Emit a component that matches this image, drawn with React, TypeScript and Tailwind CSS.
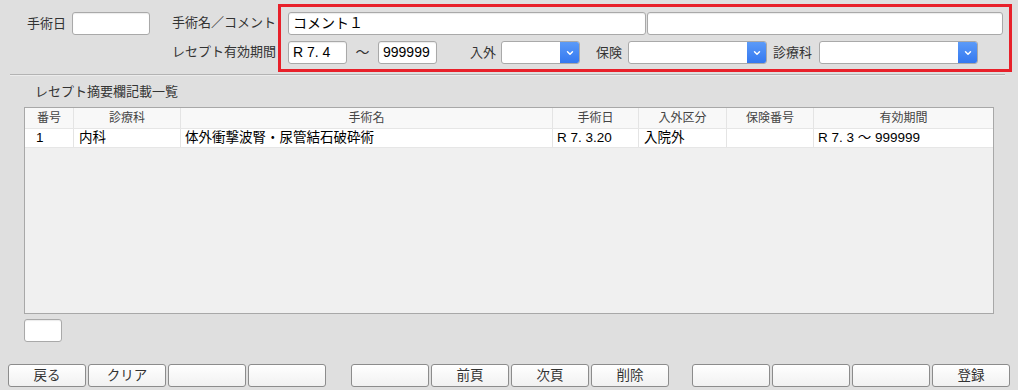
import { ChevronDown } from 'lucide-react';

const font = "font-['Liberation_Sans','Noto_Sans_CJK_JP',sans-serif]";

const columns = [
  { label: '番号', width: 'w-[48px]', cell: 'pl-[11px]' },
  { label: '診療科', width: 'w-[107px]', cell: 'pl-[5px]' },
  { label: '手術名', width: 'w-[372px]', cell: 'pl-[4px]' },
  { label: '手術日', width: 'w-[86px]', cell: 'pl-[4px]' },
  { label: '入外区分', width: 'w-[88px]', cell: 'pl-[5px]' },
  { label: '保険番号', width: 'w-[87px]', cell: 'pl-[4px]' },
  { label: '有効期間', width: 'flex-1', cell: 'pl-[4px]' },
];

const rows = [['1', '内科', '体外衝撃波腎・尿管結石破砕術', 'R 7. 3.20', '入院外', '', 'R 7. 3 ～ 999999']];

const buttonGroups = [
  ['戻る', 'クリア', '', ''],
  ['', '前頁', '次頁', '削除'],
  ['', '', '', '登録'],
];

function TextBox({ value = '', className = '' }: { value?: string; className?: string }) {
  return (
    <div
      className={`h-[23px] bg-white border border-[#a9a9a9] rounded-[3px] shadow-[inset_0_1px_1px_rgba(0,0,0,0.08)] flex items-center px-[4px] text-[14px] text-black ${className}`}
    >
      {value}
    </div>
  );
}

function SelectBox({ className = '' }: { className?: string }) {
  return (
    <div className={`h-[23px] flex border border-[#a9a9a9] rounded-[3px] bg-white overflow-hidden ${className}`}>
      <div className="flex-1" />
      <div className="w-[19px] bg-gradient-to-b from-[#5b9af8] to-[#3478f0] flex items-center justify-center">
        <ChevronDown size={10} strokeWidth={3.5} color="#ffffff" />
      </div>
    </div>
  );
}

function Label({ text, className = '' }: { text: string; className?: string }) {
  return <span className={`text-[13px] leading-[16px] text-[#333] ${className}`}>{text}</span>;
}

export default function App() {
  return (
    <div className={`w-[1018px] h-[390px] bg-[#dfdfdf] flex flex-col ${font}`}>
      {/* header form */}
      <div className="flex mt-[4px] h-[68px]">
        <div className="flex items-start pt-[8px] pl-[27px] w-[150px]">
          <Label text="手術日" className="mt-[4px]" />
          <TextBox className="w-[78px] ml-[6px]" />
        </div>
        <div className="w-[128px] flex flex-col items-end pr-[2px] pt-[11px] gap-[13px]">
          <Label text="手術名／コメント" />
          <Label text="レセプト有効期間" />
        </div>
        <div className="w-[734px] border-[3px] border-[#e8202a] flex flex-col pl-[7px] pt-[5px] gap-[6px]">
          <div className="flex gap-[1px]">
            <TextBox value="コメント１" className="w-[358px]" />
            <TextBox className="w-[356px]" />
          </div>
          <div className="flex items-center">
            <TextBox value="R 7. 4" className="w-[59px]" />
            <span className="w-[31px] text-center text-[14px] text-[#333]">～</span>
            <TextBox value="999999" className="w-[59px]" />
            <Label text="入外" className="ml-[33px] w-[31px]" />
            <SelectBox className="w-[79px]" />
            <Label text="保険" className="ml-[16px] w-[32px]" />
            <SelectBox className="w-[139px]" />
            <Label text="診療科" className="ml-[6px] w-[46px]" />
            <SelectBox className="w-[159px]" />
          </div>
        </div>
      </div>

      <div className="mt-[2px] ml-[10px] w-[995px] h-[2px] border-t border-[#b3b3b3] bg-[#ececec]" />

      <Label text="レセプト摘要欄記載一覧" className="ml-[35px] mt-[8px]" />

      {/* table */}
      <div className="ml-[24px] mt-[7px] w-[970px] h-[207px] border border-[#a8a8a8] bg-[#f0f0f0] flex flex-col">
        <div className="flex h-[21px] bg-[#f8f8f8] border-b border-[#e6e6e6]">
          {columns.map((c, i) => (
            <div
              key={c.label}
              className={`${c.width} flex items-center justify-center text-[12px] text-[#444] ${i > 0 ? 'border-l border-[#e4e4e4]' : ''}`}
            >
              {c.label}
            </div>
          ))}
        </div>
        {rows.map((r, ri) => (
          <div key={ri} className="flex h-[19px] bg-white border-b border-[#e6e6e6]">
            {columns.map((c, i) => (
              <div
                key={c.label}
                className={`${c.width} ${c.cell} flex items-center text-[13.5px] text-black whitespace-nowrap ${i > 0 ? 'border-l border-[#e4e4e4]' : ''}`}
              >
                {r[i]}
              </div>
            ))}
          </div>
        ))}
      </div>

      <TextBox className="ml-[24px] mt-[5px] w-[38px] h-[22px]" />

      {/* footer buttons */}
      <div className="flex mt-[22px] pl-[8px]">
        {buttonGroups.map((group, gi) => (
          <div key={gi} className={`flex gap-[2px] ${gi === 1 ? 'ml-[25px]' : gi === 2 ? 'ml-[23px]' : ''}`}>
            {group.map((b, bi) => (
              <button
                key={bi}
                type="button"
                className={`w-[78px] h-[23px] rounded-[3px] border border-[#8c8c8c] bg-gradient-to-b from-white to-[#f1f1f1] text-[13.5px] leading-[16px] text-[#333] ${font}`}
              >
                {b}
              </button>
            ))}
          </div>
        ))}
      </div>
    </div>
  );
}
